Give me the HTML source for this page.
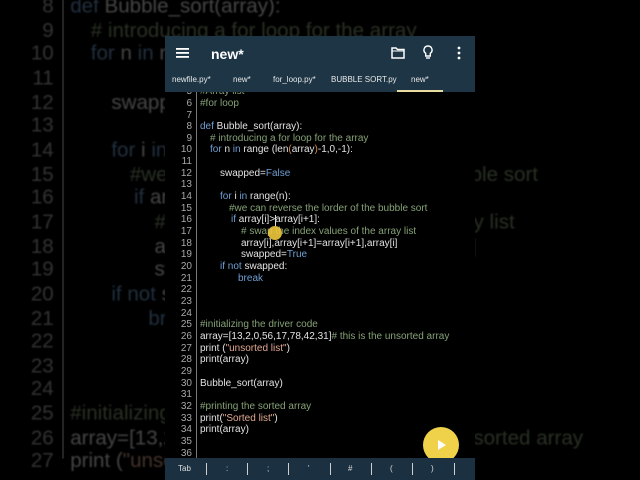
<!DOCTYPE html>
<html><head><meta charset="utf-8"><style>
*{margin:0;padding:0;box-sizing:border-box}
html,body{width:640px;height:480px;overflow:hidden}
body{background:#000;position:relative;font-family:"Liberation Sans",sans-serif}
#wrap{position:absolute;left:0;top:0;width:640px;height:480px;overflow:hidden}
.code{position:absolute;left:165px;top:86.2px;width:310px;font-size:10px;color:#e2e2e2}
.code div{height:11.67px;line-height:11.67px;white-space:pre;position:relative}
.code .n{position:absolute;left:0;width:27px;text-align:right;color:#a8a8a8}
.code .t{position:absolute;left:35px}
.gut{position:absolute;left:196px;top:86px;width:1px;height:380px;background:#777}
.k{color:#6f9fd2}.c{color:#86a277}.s{color:#e0a890}.p{color:#d98c4a}
#bg{transform-origin:0 0;transform:translate(-166.8px,-162.1px) scale(2.057);opacity:.3;filter:blur(.4px)}
#bgg{transform-origin:0 0;transform:translate(-134px,-162.3px) scale(2.057);opacity:.3;height:260px}
.phone{position:absolute;left:165px;top:36px;width:310px;height:444px;background:#000;overflow:hidden}
.bar{position:absolute;left:165px;top:36px;width:310px;height:56px;background:#1d3545}
.bar .ti{position:absolute;left:46px;top:10px;color:#fff;font-size:14px;font-weight:bold}
.tabs{position:absolute;top:39px;left:0;font-size:8px;color:#e8e8e8}
.tabs span{position:absolute;white-space:nowrap}
.bot{position:absolute;left:165px;top:458px;width:310px;height:22px;background:#1b3040;color:#ddd;font-size:8px}
.bot span{position:absolute;top:6px}
.bot i{position:absolute;top:5px;width:1px;height:12px;background:#cfcfcf}
</style></head><body>
<div id="wrap">
<div class="code" id="bg">
<div><span class="n">5</span><span class="t c">#Array list</span></div>
<div><span class="n">6</span><span class="t c">#for loop</span></div>
<div><span class="n">7</span></div>
<div><span class="n">8</span><span class="t"><span class="k">def</span> Bubble_sort(array):</span></div>
<div><span class="n">9</span><span class="t c" style="margin-left:10px"># introducing a for loop for the array</span></div>
<div><span class="n">10</span><span class="t" style="margin-left:10px"><span class="k">for</span> n <span class="k">in</span> range (len<span class="p">(</span>array<span class="p">)</span>-1,0,-1):</span></div>
<div><span class="n">11</span></div>
<div><span class="n">12</span><span class="t" style="margin-left:20px">swapped=<span class="k">False</span></span></div>
<div><span class="n">13</span></div>
<div><span class="n">14</span><span class="t" style="margin-left:20px"><span class="k">for</span> i <span class="k">in</span> range(n):</span></div>
<div><span class="n">15</span><span class="t c" style="margin-left:29px">#we can reverse the lorder of the bubble sort</span></div>
<div><span class="n">16</span><span class="t" style="margin-left:31px"><span class="k">if</span> array[i]&gt;array[i+1]:</span></div>
<div><span class="n">17</span><span class="t c" style="margin-left:41px"># swap the index values of the array list</span></div>
<div><span class="n">18</span><span class="t" style="margin-left:41px">array[i],array[i+1]=array[i+1],array[i]</span></div>
<div><span class="n">19</span><span class="t" style="margin-left:41px">swapped=<span class="k">True</span></span></div>
<div><span class="n">20</span><span class="t" style="margin-left:20px"><span class="k">if not</span> swapped:</span></div>
<div><span class="n">21</span><span class="t k" style="margin-left:38px">break</span></div>
<div><span class="n">22</span></div><div><span class="n">23</span></div><div><span class="n">24</span></div>
<div><span class="n">25</span><span class="t c">#initializing the driver code</span></div>
<div><span class="n">26</span><span class="t">array=[13,2,0,56,17,78,42,31]<span class="c"># this is the unsorted array</span></span></div>
<div><span class="n">27</span><span class="t">print (<span class="s">"unsorted list"</span>)</span></div>
</div>
<div class="gut" id="bgg"></div>
</div>

<div class="phone"></div>
<div class="code">
<div><span class="n">5</span><span class="t c">#Array list</span></div>
<div><span class="n">6</span><span class="t c">#for loop</span></div>
<div><span class="n">7</span></div>
<div><span class="n">8</span><span class="t"><span class="k">def</span> Bubble_sort(array):</span></div>
<div><span class="n">9</span><span class="t c" style="margin-left:10px"># introducing a for loop for the array</span></div>
<div><span class="n">10</span><span class="t" style="margin-left:10px"><span class="k">for</span> n <span class="k">in</span> range (len<span class="p">(</span>array<span class="p">)</span>-1,0,-1):</span></div>
<div><span class="n">11</span></div>
<div><span class="n">12</span><span class="t" style="margin-left:20px">swapped=<span class="k">False</span></span></div>
<div><span class="n">13</span></div>
<div><span class="n">14</span><span class="t" style="margin-left:20px"><span class="k">for</span> i <span class="k">in</span> range(n):</span></div>
<div><span class="n">15</span><span class="t c" style="margin-left:29px">#we can reverse the lorder of the bubble sort</span></div>
<div><span class="n">16</span><span class="t" style="margin-left:31px"><span class="k">if</span> array[i]&gt;array[i+1]:</span></div>
<div><span class="n">17</span><span class="t c" style="margin-left:41px"># swap the index values of the array list</span></div>
<div><span class="n">18</span><span class="t" style="margin-left:41px">array[i],array[i+1]=array[i+1],array[i]</span></div>
<div><span class="n">19</span><span class="t" style="margin-left:41px">swapped=<span class="k">True</span></span></div>
<div><span class="n">20</span><span class="t" style="margin-left:20px"><span class="k">if not</span> swapped:</span></div>
<div><span class="n">21</span><span class="t k" style="margin-left:38px">break</span></div>
<div><span class="n">22</span></div><div><span class="n">23</span></div><div><span class="n">24</span></div>
<div><span class="n">25</span><span class="t c">#initializing the driver code</span></div>
<div><span class="n">26</span><span class="t">array=[13,2,0,56,17,78,42,31]<span class="c"># this is the unsorted array</span></span></div>
<div><span class="n">27</span><span class="t">print (<span class="s">"unsorted list"</span>)</span></div>
<div><span class="n">28</span><span class="t">print(array)</span></div>
<div><span class="n">29</span></div>
<div><span class="n">30</span><span class="t">Bubble_sort(array)</span></div>
<div><span class="n">31</span></div>
<div><span class="n">32</span><span class="t c">#printing the sorted array</span></div>
<div><span class="n">33</span><span class="t">print(<span class="s">"Sorted list"</span>)</span></div>
<div><span class="n">34</span><span class="t">print(array)</span></div>
<div><span class="n">35</span></div>
<div><span class="n">36</span></div>
</div>
<div class="gut" style="top:92px;height:366px"></div>
<div style="position:absolute;left:275px;top:215px;width:1px;height:11px;background:#ddd"></div>
<div style="position:absolute;left:268px;top:226px;width:14px;height:14px;border-radius:50%;background:rgba(240,200,60,.9)"></div>

<div class="bar">
<svg style="position:absolute;left:11px;top:11px" width="14" height="12"><rect x="0" y="1" width="13" height="1.8" fill="#fff"/><rect x="0" y="5" width="13" height="1.8" fill="#fff"/><rect x="0" y="9" width="13" height="1.8" fill="#fff"/></svg>
<div class="ti">new*</div>
<svg style="position:absolute;left:226px;top:11px" width="14" height="12"><path d="M1 1h4l1.5 1.5H13V11H1z" fill="none" stroke="#fff" stroke-width="1.5"/><path d="M1 4h12" stroke="#fff" stroke-width="1"/></svg>
<svg style="position:absolute;left:258px;top:9px" width="10" height="15"><path d="M5 1a4 4 0 0 0-2.3 7.3V11h4.6V8.3A4 4 0 0 0 5 1z" fill="none" stroke="#fff" stroke-width="1.4"/><path d="M3 13h4" stroke="#fff" stroke-width="1.4"/></svg>
<svg style="position:absolute;left:292px;top:10px" width="4" height="14"><circle cx="2" cy="2" r="1.4" fill="#fff"/><circle cx="2" cy="7" r="1.4" fill="#fff"/><circle cx="2" cy="12" r="1.4" fill="#fff"/></svg>
<div class="tabs">
<span style="left:7px">newfile.py*</span>
<span style="left:68px">new*</span>
<span style="left:108px">for_loop.py*</span>
<span style="left:166px">BUBBLE SORT.py</span>
<span style="left:246px">new*</span>
</div>
<div style="position:absolute;left:232px;top:54px;width:46px;height:2px;background:#e8dca0"></div>
</div>

<div style="position:absolute;left:423px;top:427px;width:36px;height:36px;border-radius:50%;background:#efd24a"></div>
<svg style="position:absolute;left:436px;top:439px" width="12" height="12"><path d="M2 1L10 6L2 11z" fill="#fff"/></svg>

<div class="bot">
<span style="left:13px">Tab</span><i style="left:41px"></i>
<span style="left:61px">:</span><i style="left:82px"></i>
<span style="left:102px">;</span><i style="left:123px"></i>
<span style="left:143px">'</span><i style="left:165px"></i>
<span style="left:183px">#</span><i style="left:206px"></i>
<span style="left:225px">(</span><i style="left:247px"></i>
<span style="left:266px">)</span><i style="left:289px"></i>
</div>
</body></html>
